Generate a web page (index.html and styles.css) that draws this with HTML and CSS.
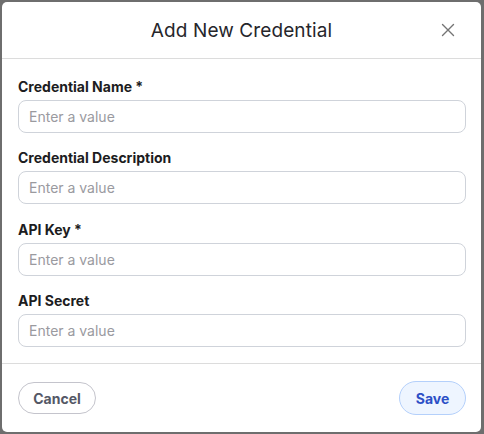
FILE: index.html
```html
<!DOCTYPE html>
<html lang="en">
<head>
<meta charset="utf-8">
<title>Add New Credential</title>
<link rel="stylesheet" href="styles.css">
</head>
<body>
<div class="dialog">
  <header class="dialog-header">
    <h1 class="dialog-title">Add New Credential</h1>
    <button class="close-btn" aria-label="Close">
      <svg width="14" height="14" viewBox="0 0 14 14"><path d="M1.5 1.5 L12.5 12.5 M12.5 1.5 L1.5 12.5" stroke="#747474" stroke-width="1.4" fill="none" stroke-linecap="round"/></svg>
    </button>
  </header>
  <main class="dialog-body">
    <div class="field">
      <label class="field-label">Credential Name *</label>
      <input class="field-input" type="text" placeholder="Enter a value">
    </div>
    <div class="field">
      <label class="field-label">Credential Description</label>
      <input class="field-input" type="text" placeholder="Enter a value">
    </div>
    <div class="field">
      <label class="field-label">API Key *</label>
      <input class="field-input" type="text" placeholder="Enter a value">
    </div>
    <div class="field">
      <label class="field-label">API Secret</label>
      <input class="field-input" type="text" placeholder="Enter a value">
    </div>
  </main>
  <footer class="dialog-footer">
    <button class="btn btn-cancel">Cancel</button>
    <button class="btn btn-save">Save</button>
  </footer>
</div>
</body>
</html>
```
FILE: styles.css
```css
* { box-sizing: border-box; }
html, body { margin: 0; height: 100%; }
body {
  background: #6e6e6e;
  padding: 2px 3px 2px 2px;
  font-family: Inter, "Noto Sans", sans-serif;
}
.dialog {
  background: #fff;
  border-radius: 5px;
  height: 430px;
  display: flex;
  flex-direction: column;
}
.dialog-header {
  height: 57px;
  border-bottom: 1px solid #dcdcdc;
  display: flex;
  align-items: center;
  justify-content: center;
  position: relative;
}
.dialog-title {
  margin: 0;
  font-size: 19px;
  font-weight: 400;
  color: #26262b;
  letter-spacing: 0.1px;
}
.close-btn {
  position: absolute;
  right: 26px;
  top: 21px;
  background: none;
  border: none;
  padding: 0;
  width: 14px;
  height: 14px;
  display: flex;
}
.dialog-body {
  padding: 18px 15px 16.5px 16px;
  display: flex;
  flex-direction: column;
  gap: 15.33px;
  border-bottom: 1px solid #dcdcdc;
}
.field {
  display: flex;
  flex-direction: column;
  gap: 3px;
}
.field-label {
  font-size: 14px;
  line-height: 20px;
  font-weight: 700;
  color: #1c1c21;
}
.field-input {
  height: 33px;
  border: 1px solid #cfd3da;
  border-radius: 8px;
  padding: 0 10px;
  font-family: inherit;
  font-size: 14px;
  color: #222;
  outline: none;
}
.field-input::placeholder { color: #9a9a9f; }
.dialog-footer {
  flex: 1;
  display: flex;
  align-items: center;
  justify-content: space-between;
  padding: 0 15px 0 16px;
}
.btn {
  font-family: inherit;
  font-size: 14px;
  font-weight: 700;
  border-radius: 999px;
  cursor: pointer;
}
.btn-cancel {
  width: 78px;
  height: 32px;
  background: #fff;
  border: 1px solid #c4c4cc;
  color: #545866;
}
.btn-save {
  width: 67px;
  height: 34px;
  background: #eef5ff;
  border: 1px solid #b4d0fb;
  color: #2c4fc6;
}
```
